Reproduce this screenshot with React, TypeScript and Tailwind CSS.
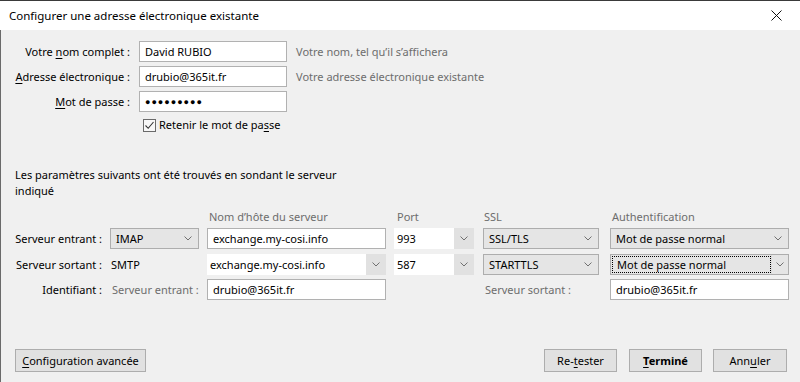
import React from "react";

const FONT = { fontFamily: '"Noto Sans", "Open Sans", sans-serif' };

function Chevron() {
  return (
    <svg width="8" height="5" viewBox="0 0 8 5" className="shrink-0">
      <path d="M0.5 0.5 L4 4 L7.5 0.5" fill="none" stroke="#707070" strokeWidth="1" />
    </svg>
  );
}

function U({ children }: { children: React.ReactNode }) {
  return <span className="underline underline-offset-2">{children}</span>;
}

function TextBox({ children, w }: { children: React.ReactNode; w: string }) {
  return (
    <div className={`${w} h-[21px] bg-white border border-[#b1b1b1] flex items-center pl-[5px] text-black whitespace-nowrap overflow-hidden`}>
      {children}
    </div>
  );
}

function Select({ children, w, focus }: { children: React.ReactNode; w: string; focus?: boolean }) {
  return (
    <div className={`${w} h-[21px] bg-[#e5e5e5] border border-[#adadad] flex items-center text-black whitespace-nowrap`}>
      {focus ? (
        <>
          <div className="flex-1 h-[17px] ml-[1px] border border-dotted border-black flex items-center pl-[4px]">{children}</div>
          <div className="w-[17px] h-full flex items-center justify-center border-l border-[#dcdcdc]">
            <Chevron />
          </div>
        </>
      ) : (
        <>
          <div className="flex-1 pl-[5px]">{children}</div>
          <div className="w-[17px] flex items-center justify-center pr-[3px]">
            <Chevron />
          </div>
        </>
      )}
    </div>
  );
}

function Combo({ children, w }: { children: React.ReactNode; w: string }) {
  return (
    <div className={`${w} h-[21px] flex items-stretch text-black whitespace-nowrap`}>
      <div className="flex-1 bg-white flex items-center pl-[3px]">{children}</div>
      <div className="w-[20px] bg-[#e1e1e1] flex items-center justify-center">
        <Chevron />
      </div>
    </div>
  );
}

function Button({ children, w, bold }: { children: React.ReactNode; w: string; bold?: boolean }) {
  return (
    <div className={`${w} h-[23px] bg-[#e1e1e1] border border-[#adadad] flex items-center justify-center text-black ${bold ? "font-bold" : ""}`}>
      {children}
    </div>
  );
}

export default function App() {
  return (
    <div className="w-[800px] h-[382px] flex flex-col text-[11px] leading-[16px] overflow-hidden" style={FONT}>
      {/* Title bar */}
      <div className="h-[30px] shrink-0 bg-white border-t border-[#3a3a3a] flex items-center justify-between pl-[9px] pr-[18px]">
        <span className="text-black text-[11.5px]">Configurer une adresse électronique existante</span>
        <svg width="11" height="11" viewBox="0 0 11 11">
          <path d="M0.5 0.5 L10.5 10.5 M10.5 0.5 L0.5 10.5" stroke="#111" strokeWidth="1" />
        </svg>
      </div>

      {/* Body */}
      <div className="flex-1 bg-[#f0f0f0] border-l border-[#6a6a6a] flex flex-col">
        {/* Identity form */}
        <div className="pt-[11px] flex flex-col gap-[4px]">
          <div className="flex items-center h-[21px]">
            <div className="w-[129px] text-right text-black">Votre <U>n</U>om complet :</div>
            <div className="ml-[9px]">
              <TextBox w="w-[148px]">David RUBIO</TextBox>
            </div>
            <div className="ml-[9px] text-[#6d6d6d]">Votre nom, tel qu’il s’affichera</div>
          </div>
          <div className="flex items-center h-[21px]">
            <div className="w-[129px] text-right text-black"><U>A</U>dresse électronique :</div>
            <div className="ml-[9px]">
              <TextBox w="w-[148px]">drubio@365it.fr</TextBox>
            </div>
            <div className="ml-[9px] text-[#6d6d6d]">Votre adresse électronique existante</div>
          </div>
          <div className="flex items-center h-[21px]">
            <div className="w-[129px] text-right text-black"><U>M</U>ot de passe :</div>
            <div className="ml-[9px]">
              <TextBox w="w-[148px]">
                <span className="text-[9px] tracking-[1px]" style={{ fontFamily: '"Liberation Sans", "DejaVu Sans", sans-serif' }}>●●●●●●●●●</span>
              </TextBox>
            </div>
          </div>
        </div>

        {/* Remember password */}
        <div className="mt-[6px] h-[14px] flex items-center pl-[142px]">
          <div className="w-[13px] h-[13px] border border-[#6a6a6a] bg-[#f7f7f7] flex items-center justify-center">
            <svg width="11" height="11" viewBox="0 0 11 11">
              <path d="M1.5 5.5 L4.2 8.3 L9.5 2" fill="none" stroke="#333" strokeWidth="1.1" />
            </svg>
          </div>
          <span className="ml-[3px] text-black">Retenir le mot de pa<U>s</U>se</span>
        </div>

        {/* Paragraph */}
        <div className="mt-[35px] pl-[14px] w-[345px] text-black">
          Les paramètres suivants ont été trouvés en sondant le serveur indiqué
        </div>

        {/* Server table */}
        <div className="mt-[11px] flex flex-col">
          <div className="flex h-[14px] leading-[14px] text-[#6d6d6d]">
            <div className="w-[101px]" />
            <div className="ml-[8px] w-[89px]" />
            <div className="ml-[8px] w-[179px] pl-[2px]">Nom d’hôte du serveur</div>
            <div className="ml-[8px] w-[80px] pl-[3px]">Port</div>
            <div className="ml-[9px] w-[116px] pl-[1px]">SSL</div>
            <div className="ml-[11px] w-[179px] pl-[2px]">Authentification</div>
          </div>

          <div className="mt-[4px] flex items-center h-[21px]">
            <div className="w-[101px] text-right text-black">Serveur entrant :</div>
            <div className="ml-[8px]">
              <Select w="w-[89px]">IMAP</Select>
            </div>
            <div className="ml-[8px]">
              <TextBox w="w-[179px]">exchange.my-cosi.info</TextBox>
            </div>
            <div className="ml-[8px]">
              <Combo w="w-[80px]">993</Combo>
            </div>
            <div className="ml-[9px]">
              <Select w="w-[116px]">SSL/TLS</Select>
            </div>
            <div className="ml-[11px]">
              <Select w="w-[179px]">Mot de passe normal</Select>
            </div>
          </div>

          <div className="mt-[5px] flex items-center h-[21px]">
            <div className="w-[101px] text-right text-black">Serveur sortant :</div>
            <div className="ml-[8px] w-[89px] pl-[1px] text-black">SMTP</div>
            <div className="ml-[8px]">
              <Combo w="w-[179px]">exchange.my-cosi.info</Combo>
            </div>
            <div className="ml-[8px]">
              <Combo w="w-[80px]">587</Combo>
            </div>
            <div className="ml-[9px]">
              <Select w="w-[116px]">STARTTLS</Select>
            </div>
            <div className="ml-[11px]">
              <Select w="w-[179px]" focus>Mot de passe normal</Select>
            </div>
          </div>

          <div className="mt-[4px] flex items-center h-[21px]">
            <div className="w-[101px] text-right text-black">Identifiant :</div>
            <div className="ml-[8px] w-[89px] pl-[2px] text-[#6d6d6d]">Serveur entrant :</div>
            <div className="ml-[8px]">
              <TextBox w="w-[179px]">drubio@365it.fr</TextBox>
            </div>
            <div className="ml-[8px] w-[80px]" />
            <div className="ml-[9px] w-[116px] pl-[2px] text-[#6d6d6d]">Serveur sortant :</div>
            <div className="ml-[11px]">
              <TextBox w="w-[179px]">drubio@365it.fr</TextBox>
            </div>
          </div>
        </div>

        {/* Buttons */}
        <div className="mt-auto mb-[10px] flex items-center pl-[14px] pr-[13px]">
          <Button w="w-[131px]"><span><U>C</U>onfiguration avancée</span></Button>
          <div className="flex-1" />
          <Button w="w-[73px]"><span>Re-<U>t</U>ester</span></Button>
          <div className="ml-[12px]">
            <Button w="w-[73px]" bold><span><U>T</U>erminé</span></Button>
          </div>
          <div className="ml-[11px]">
            <Button w="w-[74px]"><span>Ann<U>u</U>ler</span></Button>
          </div>
        </div>
      </div>
    </div>
  );
}
